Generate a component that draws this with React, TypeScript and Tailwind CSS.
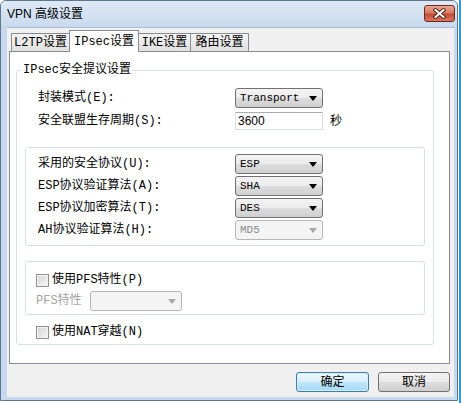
import React from "react"

const song = { fontFamily: '"Liberation Mono", "Noto Sans CJK SC", monospace' }
const ui = { fontFamily: '"Liberation Sans", "Noto Sans CJK SC", sans-serif' }

function Arrow({ disabled }: { disabled?: boolean }) {
  return (
    <svg width="8" height="5" viewBox="0 0 8 5" className="shrink-0">
      <polygon points="0,0 8,0 4,5" fill={disabled ? "#a8a8a8" : "#000"} />
    </svg>
  )
}

function Combo({ value, disabled, w = "w-[88px]" }: { value: string; disabled?: boolean; w?: string }) {
  return (
    <div
      className={`${w} h-[20px] rounded-[3px] border flex items-center justify-between pl-[4px] pr-[5px] text-[11px] ${
        disabled
          ? "border-[#b4b8bb] bg-[#f4f4f4] text-[#8a8a8a]"
          : "border-[#707070] bg-[linear-gradient(#f3f3f3_0%,#ebebeb_50%,#dddddd_50%,#cfcfcf_100%)] text-black"
      }`}
      style={song}
    >
      <span>{value}</span>
      <Arrow disabled={disabled} />
    </div>
  )
}

function Check({ label }: { label: string }) {
  return (
    <div className="flex items-center gap-[3px] h-[13px]">
      <div className="w-[13px] h-[13px] border border-[#8e8f8f] bg-[linear-gradient(135deg,#d4d4d4,#f6f6f6)] shadow-[inset_0_0_0_1px_#f4f4f4]" />
      <span className="text-[12px] leading-[13px] text-black whitespace-nowrap" style={song}>
        {label}
      </span>
    </div>
  )
}

function Tab({ label, active, w }: { label: string; active?: boolean; w: string }) {
  return (
    <div
      className={`${w} -ml-px first:ml-0 flex items-center justify-center border border-[#898c95] text-[12px] text-black whitespace-nowrap ${
        active
          ? "relative z-10 h-[22px] -mb-px border-b-0 bg-white"
          : "h-[18px] border-b-0 bg-[linear-gradient(#f4f4f4,#e0e0e0)]"
      }`}
      style={song}
    >
      {label}
    </div>
  )
}

function Button({ label, primary }: { label: string; primary?: boolean }) {
  return (
    <div
      className={`h-[20px] flex items-center justify-center rounded-[3px] border text-[12px] text-black ${
        primary
          ? "w-[73px] border-[#3c7fb1] bg-[linear-gradient(#eaf6fd_0%,#d9f0fc_50%,#bee6fd_50%,#a7d9f5_100%)] shadow-[inset_0_0_0_1px_#d6eefb]"
          : "w-[72px] border-[#707070] bg-[linear-gradient(#f3f3f3_0%,#ebebeb_50%,#dddddd_50%,#cfcfcf_100%)]"
      }`}
      style={ui}
    >
      {label}
    </div>
  )
}

export default function App() {
  return (
    <div className="w-[461px] h-[403px] bg-white flex items-start">
      <div className="w-[458px] h-[401px] border border-[#60768f] rounded-t-[6px] bg-[#c6d9ee] flex flex-col">
        {/* title bar */}
        <div className="h-[26px] flex items-start pl-[6px] pr-[2px] rounded-t-[5px] bg-[linear-gradient(#dfe9f5,#c8daee)]">
          <span className="mt-[5px] text-[12px] leading-[16px] text-black" style={ui}>
            VPN 高级设置
          </span>
          <div className="ml-auto mt-[4px] w-[31px] h-[17px] rounded-[3px] border border-[#6e2a1e] bg-[linear-gradient(#e9a897_0%,#d97b63_45%,#c54a33_55%,#d8785f_100%)] flex items-center justify-center">
            <svg width="13" height="11" viewBox="0 0 13 11">
              <path d="M2.5 2 L10.5 9 M10.5 2 L2.5 9" stroke="#5b2118" strokeWidth="4" strokeLinecap="square" />
              <path d="M2.5 2 L10.5 9 M10.5 2 L2.5 9" stroke="#fff" strokeWidth="2" strokeLinecap="square" />
            </svg>
          </div>
        </div>

        {/* client */}
        <div className="flex-1 ml-[6px] mr-[3px] mb-[3px] bg-[#f0f0f0] border-t border-[#a8bcd2]">
          <div className="ml-[2px] mt-[3px] w-[441px]">
            {/* tabs */}
            <div className="h-[20px] flex items-end pl-[2px]">
              <Tab label="L2TP设置" w="w-[59px]" />
              <Tab label="IPsec设置" w="w-[70px]" active />
              <Tab label="IKE设置" w="w-[53px]" />
              <Tab label="路由设置" w="w-[59px]" />
            </div>

            {/* panel */}
            <div className="h-[313px] border border-[#898c95] bg-white pt-[18px] pl-[6px]">
              <div className="relative w-[418px] h-[275px] border border-[#d5dfe5] rounded-[3px]">
                <span
                  className="absolute left-[4px] -top-[8px] bg-white px-[2px] text-[12px] leading-[14px] text-black"
                  style={song}
                >
                  IPsec安全提议设置
                </span>

                <div className="mt-[17px] flex items-center">
                  <span className="w-[218px] pl-[21px] text-[12px] text-black" style={song}>
                    封装模式(E):
                  </span>
                  <Combo value="Transport" />
                </div>
                <div className="mt-[4px] flex items-center">
                  <span className="w-[218px] pl-[21px] text-[12px] text-black" style={song}>
                    安全联盟生存周期(S):
                  </span>
                  <div
                    className="w-[88px] h-[18px] border border-[#dbdfe6] border-t-[#abadb3] bg-white flex items-center pl-[2px] text-[12px] text-black"
                    style={ui}
                  >
                    3600
                  </div>
                  <span className="ml-[7px] text-[12px] text-black" style={ui}>
                    秒
                  </span>
                </div>

                <div className="mt-[17px] ml-[8px] w-[400px] h-[99px] border border-[#d5dfe5] rounded-[3px] pt-[6px] flex flex-col gap-[2px]">
                  {[
                    ["采用的安全协议(U):", "ESP"],
                    ["ESP协议验证算法(A):", "SHA"],
                    ["ESP协议加密算法(T):", "DES"],
                    ["AH协议验证算法(H):", "MD5"],
                  ].map(([l, v], i) => (
                    <div key={l} className="flex items-center">
                      <span className="w-[209px] pl-[12px] text-[12px] text-black" style={song}>
                        {l}
                      </span>
                      <Combo value={v} disabled={i === 3} />
                    </div>
                  ))}
                </div>

                <div className="mt-[15px] ml-[8px] w-[400px] h-[54px] border border-[#d5dfe5] rounded-[3px] pt-[12px] pl-[10px]">
                  <Check label="使用PFS特性(P)" />
                  <div className="mt-[4px] flex items-center">
                    <span className="w-[54px] text-[12px] text-[#a3a3a3]" style={song}>
                      PFS特性
                    </span>
                    <Combo value="" disabled w="w-[92px]" />
                  </div>
                </div>

                <div className="mt-[11px] ml-[19px]">
                  <Check label="使用NAT穿越(N)" />
                </div>
              </div>
            </div>

            {/* buttons */}
            <div className="mt-[8px] flex justify-end gap-[9px]">
              <Button label="确定" primary />
              <Button label="取消" />
            </div>
          </div>
        </div>
      </div>
      <div className="w-[3px] h-[403px] bg-[linear-gradient(90deg,#ffffff_0%,#ffffff_33%,#2a9ae0_33%,#2a9ae0_100%)]" />
    </div>
  )
}
